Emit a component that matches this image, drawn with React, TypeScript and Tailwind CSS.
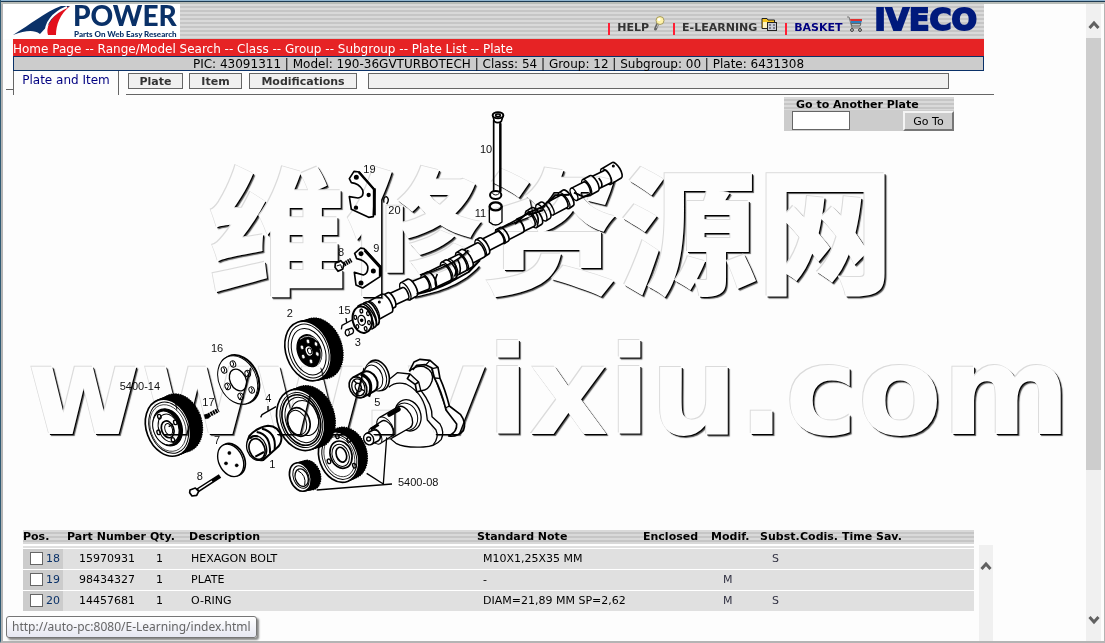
import type { ReactNode } from "react";
import { clsx } from "clsx";

const stripes = "bg-[repeating-linear-gradient(180deg,#d9d9d9_0_2px,#c6c6c6_2px_4px)]";

interface Part {
  pos: number;
  number: string;
  qty: number;
  description: string;
  note: string;
  modif?: boolean;
  subst?: boolean;
}

const parts: Part[] = [
  { pos: 18, number: "15970931", qty: 1, description: "HEXAGON BOLT", note: "M10X1,25X35 MM", subst: true },
  { pos: 19, number: "98434327", qty: 1, description: "PLATE", note: "-", modif: true },
  { pos: 20, number: "14457681", qty: 1, description: "O-RING", note: "DIAM=21,89 MM SP=2,62", modif: true, subst: true },
];

const crumbs = ["Home Page", "Range/Model Search", "Class", "Group", "Subgroup", "Plate List", "Plate"];

function Logo() {
  return (
    <a href="#" aria-label="Power" className="flex h-[35px] w-[177px] shrink-0 items-start bg-white text-[#0a3168]">
      <svg viewBox="0 0 177 35" className="h-[35px] w-[177px] overflow-visible">
        <path d="M10 31 C28 20 42 8 58 2 L67 2 C56 9 46 20 37 30 C30 25 22 27 10 31 Z" fill="#0a3168" />
        <path d="M67 2 C53 8 42 19 45 31 L53 31 C53 21 57 10 67 2 Z" fill="#e3101c" />
        <path d="M64 3 C50 9 41 19 43 31" fill="none" stroke="#fff" strokeWidth="2" />
        <text x="70" y="22" fontFamily="Lato, sans-serif" fontWeight="900" fontSize="28" fill="#0a3168">
          POWER
        </text>
        <text x="71" y="33" fontFamily="Lato, sans-serif" fontWeight="900" fontSize="8" fill="#0a3168">
          Parts On Web Easy Research
        </text>
      </svg>
    </a>
  );
}

function BulbIcon() {
  return (
    <svg viewBox="0 0 12 15" className="h-[15px] w-3">
      <path d="M5 7 L2.500 13" stroke="#666" strokeWidth="3" strokeLinecap="round" />
      <path d="M5.500 7 L3.500 12" stroke="#bbb" />
      <circle cx="7" cy="4.500" r="4" fill="#fff3a8" stroke="#a59a60" />
      <circle cx="6" cy="3.500" r="1.500" fill="#fff" />
    </svg>
  );
}

function FolderIcon() {
  return (
    <svg viewBox="0 0 16 16" className="h-4 w-4">
      <path d="M1 2.500 H6 L7 4 H13.500 V12.500 H1 Z" fill="#f7c520" stroke="#222" />
      <rect x="2" y="6" width="6" height="6" fill="#fff3c0" />
      <rect x="6.500" y="6.500" width="9" height="8" fill="#c9cdd8" stroke="#222" />
      <path d="M8 9 H10 M12 9 H14 M8 12 H10 M12 12 H14" stroke="#334" />
    </svg>
  );
}

function CartIcon() {
  return (
    <svg viewBox="0 0 16 16" className="h-4 w-4">
      <path d="M0 1 H2 L5 12 H14" fill="none" stroke="#777" />
      <path d="M3 3 H15 V5 H3.500 Z" fill="#e03030" />
      <path d="M3.500 5 H15 L14 7 H4 Z" fill="#2f7fc0" />
      <path d="M4 7.500 H14 L13 10 H5 Z" fill="#b9c0c0" stroke="#666" />
      <circle cx="5" cy="14" r="1.400" fill="#ddd" stroke="#333" />
      <circle cx="13" cy="14" r="1.400" fill="#ddd" stroke="#333" />
    </svg>
  );
}

function Chevron({ down }: { down?: boolean }) {
  return (
    <svg viewBox="0 0 12 10" className="h-[10px] w-3">
      <path d={down ? "M1.500 2 L6 7 L10.500 2" : "M1.500 8 L6 3 L10.500 8"} fill="none" stroke="#606060" strokeWidth="3" />
    </svg>
  );
}

function HeaderLink({ label, icon, blue }: { label: string; icon: ReactNode; blue?: boolean }) {
  return (
    <span className="flex items-start">
      <span className="mr-[7px] mt-[7px] h-3 w-[2px] bg-[#ff1f35]" />
      <a href="#" className={clsx("flex items-start gap-1 text-[11px] font-bold", blue ? "text-[#000080]" : "text-[#333]")}>
        <span className="pt-1">{label}</span>
        {icon}
      </a>
    </span>
  );
}

// Cylinder whose near face is at (x1, y1), seen at an angle
function Tube({ d, sw = 5, k = 0.4 }: { d: number[]; sw?: number; k?: number }) {
  const [x1, y1, x2, y2, r] = d;
  const a = Math.atan2(y2 - y1, x2 - x1);
  const nx = -Math.sin(a) * r;
  const ny = Math.cos(a) * r;
  const deg = (a * 180) / Math.PI;
  return (
    <g fill="#fff" stroke="#000" strokeWidth={sw}>
      <path
        d={`M${x1 - nx} ${y1 - ny} L${x2 - nx} ${y2 - ny} A${r * k} ${r} ${deg} 0 1 ${x2 + nx} ${y2 + ny} L${x1 + nx} ${y1 + ny} Z`}
      />
      <ellipse cx={x1} cy={y1} rx={r * k} ry={r} transform={`rotate(${deg} ${x1} ${y1})`} strokeWidth={sw - 1} />
    </g>
  );
}

function Ring({ x, y, rx, ry, fill = "none", sw = 4, rot = -20 }: { x: number; y: number; rx: number; ry: number; fill?: string; sw?: number; rot?: number }) {
  return (
    <ellipse cx={x} cy={y} rx={rx} ry={ry} fill={fill} stroke="#000" strokeWidth={sw} transform={`rotate(${rot} ${x} ${y})`} />
  );
}

// Toothed wheel: stacked black rims behind a white face
function Gear({ x, y, rx, ry, dx, dy, children }: { x: number; y: number; rx: number; ry: number; dx: number; dy: number; children?: ReactNode }) {
  return (
    <g>
      {[1, 0.8, 0.6, 0.4, 0.2].map((t) => (
        <Ring key={t} x={x + dx * t} y={y + dy * t} rx={rx} ry={ry} fill="#000" />
      ))}
      <ellipse
        cx={x + dx}
        cy={y + dy}
        rx={rx + 1}
        ry={ry + 1}
        fill="none"
        stroke="#000"
        strokeWidth="5"
        strokeDasharray="4 3"
        transform={`rotate(-20 ${x + dx} ${y + dy})`}
      />
      <Ring x={x} y={y} rx={rx} ry={ry} fill="#fff" sw={5} />
      <Ring x={x + 2} y={y} rx={rx - 8} ry={ry - 9} sw={3} />
      {children}
    </g>
  );
}

const camshaft = [
  [858, 230, 890, 211, 27],
  [822, 250, 862, 230, 21],
  [800, 262, 822, 250, 26],
  [762, 283, 800, 264, 20],
  [732, 302, 744, 294, 28],
  [690, 326, 732, 304, 21],
  [664, 338, 676, 331, 28],
  [634, 358, 650, 348, 29],
  [600, 376, 634, 360, 21],
  [550, 404, 600, 378, 21],
  [541, 410, 552, 403, 24],
  [490, 438, 541, 412, 20],
  [482, 444, 492, 438, 28],
  [440, 472, 482, 450, 24],
  [426, 484, 440, 475, 31],
  [398, 502, 426, 488, 27],
  [380, 514, 392, 507, 31],
  [334, 540, 380, 518, 26],
  [318, 548, 334, 540, 27],
  [276, 566, 318, 549, 20],
  [256, 574, 276, 563, 29],
  [212, 600, 256, 580, 19],
  [198, 608, 214, 600, 24],
  [160, 632, 200, 610, 31],
  [148, 644, 156, 640, 38],
  [136, 652, 144, 647, 40],
];

const holes16 = [
  [369, 192],
  [342, 210],
  [413, 221],
  [353, 259],
  [425, 270],
  [392, 289],
];

const labels: [string, number, number][] = [
  ["10", 1110, 160],
  ["11", 1094, 352],
  ["19", 760, 220],
  ["20", 835, 341],
  ["8", 684, 468],
  ["9", 790, 457],
  ["15", 685, 641],
  ["3", 734, 737],
  ["2", 530, 651],
  ["16", 303, 757],
  ["5400-14", 29, 869],
  ["17", 277, 917],
  ["4", 466, 907],
  ["5", 793, 917],
  ["7", 312, 1031],
  ["8", 260, 1141],
  ["1", 478, 1103],
  ["5400-08", 864, 1159],
];

function PlateDrawing() {
  return (
    <svg viewBox="0 0 1560 1230" className="ml-[107px] mt-[5px] h-[410px] w-[520px] shrink-0" role="img" aria-label="Plate 6431308">
      {/* valve gear, lock plates and camshaft */}
      <g transform="translate(630 0)" fill="#fff" stroke="#000" strokeWidth="5" strokeLinejoin="round">
        <path d="M521 60 V276 H541 V60 Z" />
        <path d="M541 70 V275" strokeWidth="7" />
        <path d="M519 48 L523 64 Q533 72 544 64 L549 48 Z" />
        <ellipse cx="534" cy="46" rx="16" ry="9" strokeWidth="6" />
        <ellipse cx="534" cy="46" rx="7" ry="4" />
        <ellipse cx="527" cy="285" rx="17" ry="12" strokeWidth="6" />
        <path d="M517 280 Q527 290 538 280" strokeWidth="3" />
        <path d="M508 320 V366 Q527 384 546 366 V320 Z" strokeWidth="4" />
        <ellipse cx="527" cy="319" rx="18" ry="12" strokeWidth="7" />
        <path d="M102 214 L88 236 L94 248 Q116 250 128 270 Q134 292 114 294 L88 290 L94 328 L146 352 L160 350 L164 270 L118 216 Z" />
        <path d="M163 265 V346" strokeWidth="9" />
        <path d="M116 216 L162 268" strokeWidth="7" />
        <circle cx="109" cy="232" r="5" fill="#000" />
        <circle cx="146" cy="285" r="4" fill="#000" />
        <circle cx="108" cy="323" r="4" fill="#000" />
        <path d="M122 444 L104 460 L110 476 Q134 480 143 498 Q146 520 130 525 L103 517 L108 555 L128 564 L180 530 L182 500 L132 446 Z" />
        <path d="M134 450 L181 502 V528" fill="none" strokeWidth="9" />
        <circle cx="123" cy="461" r="5" fill="#000" />
        <circle cx="160" cy="513" r="5" fill="#000" />
        <circle cx="123" cy="549" r="5" fill="#000" />
        <path d="M66 496 L94 480" strokeWidth="14" strokeDasharray="5 2" />
        <path d="M46 490 L62 482 L72 492 L68 508 L54 514 L45 502 Z" />
        <path d="M50 498 L62 494 L66 506" fill="none" strokeWidth="3" />
        <path d="M192 308 Q188 290 200 290 Q210 298 200 312" fill="none" strokeWidth="4" />
        <path d="M64 688 L66 676 L96 660 M80 668 L78 654" fill="none" strokeWidth="4" />
        <path d="M78 690 L96 684 Q104 692 98 700 L82 708 Q72 702 78 690 Z" strokeWidth="4" />
        <path d="M84 688 Q92 694 86 706" fill="none" strokeWidth="3" />
        {camshaft.map((d) => (
          <Tube key={d[0]} d={d} />
        ))}
        <path d="M585 372 L620 340 L675 318 M625 345 L670 330 M690 302 L706 286 L748 284 M762 278 L790 290 L812 286" fill="none" strokeWidth="6" />
        <path d="M290 582 Q340 572 392 546 L446 516 L480 480" fill="none" strokeWidth="6" />
        <path d="M400 484 Q414 504 404 530 M412 478 Q426 498 418 524 M352 522 Q342 542 348 560 M644 334 Q660 352 652 376 M836 234 Q850 250 844 262" fill="none" strokeWidth="5" />
        <circle cx="880" cy="198" r="2" />
        <circle cx="178" cy="606" r="2" />
        <Ring x={127} y={659} rx={29} ry={40} fill="#fff" sw={6} rot={-12} />
        <Ring x={125} y={661} rx={11} ry={15} sw={4} rot={-12} />
        <circle cx="125" cy="661" r="3" fill="#000" />
        {[[124, 633], [144, 641], [147, 668], [137, 686], [112, 680], [106, 652]].map(([x, y]) => (
          <Ring key={x} x={x} y={y} rx={4} ry={6} rot={-12} />
        ))}
      </g>

      {/* gears, washers, bushings and crankshaft */}
      <g transform="translate(0 600)" fill="#fff" stroke="#000" strokeLinejoin="round">
        <Gear x={594} y={153} rx={66} ry={92} dx={34} dy={-8}>
          <Ring x={596} y={155} rx={49} ry={72} sw={3} />
          <Ring x={598} y={152} rx={35} ry={49} fill="#000" />
          <Ring x={596} y={154} rx={28} ry={38} fill="#000" />
          {[[594, 124], [618, 132], [622, 162], [603, 184], [580, 170], [576, 142]].map(([x, y]) => (
            <Ring key={x} x={x} y={y} rx={5} ry={7} fill="#fff" sw={2} />
          ))}
          <Ring x={597} y={153} rx={12} ry={17} fill="#fff" sw={5} />
          <Ring x={599} y={153} rx={6} ry={9} sw={3} />
          <path d="M570 118 Q596 98 622 122 M630 146 Q640 172 622 198" fill="none" stroke="#fff" strokeWidth="2" />
        </Gear>

        <Ring x={388} y={238} rx={56} ry={76} fill="#fff" sw={6} rot={-25} />
        <Ring x={383} y={240} rx={56} ry={76} fill="#fff" sw={3} rot={-25} />
        <Ring x={384} y={240} rx={24} ry={34} sw={4} rot={-25} />
        {holes16.map(([x, y]) => (
          <g key={x}>
            <Ring x={x} y={y} rx={8} ry={10} sw={3} />
            <path d={`M${x - 2} ${y - 8} Q${x + 6} ${y} ${x - 1} ${y + 8}`} fill="none" strokeWidth="3" />
          </g>
        ))}

        <Gear x={174} y={383} rx={65} ry={88} dx={34} dy={-14}>
          <Ring x={174} y={384} rx={52} ry={72} sw={2} />
          <Ring x={173} y={382} rx={42} ry={57} fill="#000" />
          <Ring x={168} y={384} rx={38} ry={52} fill="#fff" sw={3} />
          <Ring x={176} y={384} rx={30} ry={43} sw={3} />
          <Ring x={173} y={388} rx={18} ry={26} sw={5} />
          <Ring x={176} y={388} rx={11} ry={18} sw={3} />
          {[[148, 350], [196, 367], [189, 420], [146, 397]].map(([x, y]) => (
            <Ring key={x} x={x} y={y} rx={5} ry={7} sw={4} />
          ))}
          <path d="M176 380 L190 372 M208 360 Q222 390 204 418" fill="none" strokeWidth="4" />
        </Gear>

        <path d="M288 350 L326 330" strokeWidth="13" strokeDasharray="6 2" />
        <path d="M282 344 L296 342 L298 354 L286 357 Z" fill="#000" />
        <path d="M452 352 L456 344 L498 320 M474 334 V318" fill="none" strokeWidth="4" />

        <Ring x={367} y={479} rx={36} ry={51} fill="#fff" sw={5} rot={-25} />
        <Ring x={362} y={481} rx={36} ry={51} fill="#fff" sw={4} rot={-25} />
        <circle cx="358" cy="459" r="5" fill="#000" />
        <circle cx="348" cy="490" r="5" fill="#000" />
        <circle cx="380" cy="496" r="5" fill="#000" />
        <path d="M262 572 L330 528" strokeWidth="13" />
        <path d="M266 569 L306 543" stroke="#fff" strokeWidth="4" />
        <path d="M240 570 L256 564 L266 574 L260 586 L246 588 L239 578 Z" strokeWidth="5" />

        <Gear x={686} y={471} rx={58} ry={78} dx={24} dy={-12}>
          <Ring x={688} y={470} rx={44} ry={62} sw={2} />
          <Ring x={693} y={464} rx={32} ry={42} sw={5} />
          <Ring x={692} y={466} rx={25} ry={34} sw={3} />
          <Ring x={694} y={464} rx={15} ry={23} sw={5} />
          {[[682, 409], [733, 497], [657, 484], [716, 420]].map(([x, y]) => (
            <Ring key={x} x={x} y={y} rx={5} ry={7} />
          ))}
        </Gear>

        <Gear x={571} y={531} rx={31} ry={44} dx={27} dy={-6}>
          <Ring x={575} y={533} rx={19} ry={27} sw={4} />
          <path d="M564 512 Q590 526 584 556" fill="none" strokeWidth="3" />
        </Gear>

        {/* bushing 1 */}
        <path
          d="M418 408 Q440 382 474 377 Q506 378 514 410 Q516 432 500 444 L460 480 Q440 484 424 466 Q404 438 418 408 Z"
          strokeWidth="6"
        />
        <Ring x={440} y={444} rx={29} ry={38} fill="#fff" sw={4} />
        <Ring x={441} y={447} rx={23} ry={32} sw={5} />
        <path d="M440 396 Q482 402 480 460 M456 386 Q500 396 494 448" fill="none" strokeWidth="6" />
        <path d="M420 416 Q430 404 444 410 M436 470 L462 456" fill="none" strokeWidth="6" />

        <Gear x={572} y={360} rx={69} ry={94} dx={30} dy={-10}>
          <Ring x={574} y={360} rx={55} ry={78} sw={5} />
          <Ring x={576} y={360} rx={48} ry={70} sw={3} />
          <Ring x={584} y={354} rx={40} ry={54} sw={3} />
          <Ring x={566} y={366} rx={33} ry={44} fill="#fff" sw={5} />
          <Ring x={562} y={368} rx={27} ry={38} sw={3} />
        </Gear>

        {/* hub 5 */}
        <Ring x={804} y={226} rx={32} ry={47} fill="#fff" sw={5} />
        <Ring x={797} y={229} rx={31} ry={45} fill="#fff" sw={3} />
        <Ring x={790} y={232} rx={27} ry={38} fill="#fff" sw={3} />
        <Tube d={[744, 262, 776, 245, 33]} sw={6} k={0.75} />
        <path d="M752 222 Q796 240 776 290" fill="none" strokeWidth="9" />
        <Ring x={745} y={262} rx={19} ry={26} sw={4} />
        <Ring x={745} y={262} rx={9} ry={13} sw={4} />
        <path d="M730 240 L742 252 M756 240 L748 254 M762 272 L750 266 M738 284 L742 272" strokeWidth="4" />

        {/* rear web */}
        <path
          d="M898 214 L912 186 L930 178 L960 181 L984 202 L990 235 Q1006 270 1018 318 L1052 344 Q1070 368 1060 392 Q1042 412 1016 408 Q1042 396 1040 372 L1008 330 Q994 270 972 232 L966 204 L946 194 L920 196 L908 210"
          fill="none"
          strokeWidth="5"
        />
        <path d="M960 181 L948 194 M984 202 L966 206 M990 235 L972 234 M1018 318 L1006 324" strokeWidth="4" />
        <path d="M898 214 Q916 196 942 200 Q974 214 966 244 Q956 272 934 272" fill="none" strokeWidth="4" />
        {/* front web */}
        <path
          d="M840 236 L862 218 L900 222 L926 246 L932 270 Q968 316 966 350 L990 372 Q1004 396 994 418 Q976 440 940 441 Q884 444 858 430 Q822 404 824 378"
          fill="none"
          strokeWidth="4"
        />
        <path d="M836 262 Q856 244 888 252 Q936 276 948 330 L952 360 L978 390 Q988 412 970 434" fill="none" strokeWidth="4" />
        <path d="M900 222 L892 236 L916 254 L920 276 L934 272 M926 246 L914 254" fill="none" strokeWidth="5" />
        <Ring x={894} y={346} rx={38} ry={48} fill="#fff" sw={4} />
        <Ring x={888} y={350} rx={34} ry={42} fill="#fff" sw={3} />
        <Tube d={[826, 384, 882, 352, 36]} sw={4} k={0.6} />
        <Tube d={[796, 408, 830, 386, 27]} sw={4} k={0.6} />
        <Tube d={[776, 417, 796, 407, 18]} sw={5} k={0.8} />
        <circle cx="776" cy="417" r="6" strokeWidth="4" />
        <path d="M838 344 L866 328" strokeWidth="13" strokeLinecap="round" />
        <path d="M782 388 L806 374" strokeWidth="8" />

        <path d="M620 570 L846 552 M830 412 L820 552 L770 520" fill="none" strokeWidth="4" />
      </g>

      <g fontFamily="Liberation Sans, sans-serif" fontSize="33" fill="#111">
        {labels.map(([text, x, y]) => (
          <text key={`${text}-${x}`} x={x} y={y}>
            {text}
          </text>
        ))}
      </g>
    </svg>
  );
}

function Watermark() {
  return (
    <div
      aria-hidden="true"
      className="pointer-events-none absolute inset-0 whitespace-nowrap leading-none text-white mix-blend-multiply [text-shadow:-1px_-1px_0_#ddd,1px_1px_0_#000,2px_2px_1px_#555]"
    >
      <p className="absolute left-[206px] top-[61px] font-['Noto_Sans_CJK_SC',sans-serif] text-[137px] font-black">维修资源网</p>
      <p className="absolute left-[24px] top-[235px] text-[123px] font-bold">www.vixiu.com</p>
    </div>
  );
}

function GoToPlate() {
  return (
    <form className="ml-[154px] mt-[2px] w-[170px] self-start bg-[#ccc]" onSubmit={(e) => e.preventDefault()}>
      <label htmlFor="plate" className={clsx("block h-[13px] pl-3 text-[11px] font-bold leading-[15px]", stripes)}>
        Go to Another Plate
      </label>
      <div className="flex justify-between pl-2 pt-px">
        <input id="plate" className="h-[19px] w-[58px] border border-[#666] bg-white px-1 text-[11px]" />
        <button className="h-5 w-[51px] border-2 border-t-[#f4f4f4] border-l-[#f4f4f4] border-b-[#777] border-r-[#777] bg-[#ccc] text-[11px] leading-none">
          Go To
        </button>
      </div>
    </form>
  );
}

function Tabs() {
  const tab = "h-4 border border-[#666] bg-[#f0f0f0] text-[11px] font-bold leading-[15px] text-[#333]";
  return (
    <nav className="flex h-6 items-start">
      <span className="ml-[3px] mt-[18px] w-[7px] border-t border-[#666]" />
      <a href="#" className="h-6 w-[106px] border-x border-[#666] text-center text-xs leading-[19px] text-[#000080]">
        Plate and Item
      </a>
      <div className="ml-[7px] flex h-6 w-[868px] items-start border-b border-[#666] pl-[2px] pt-[2px]">
        <button className={clsx(tab, "w-[55px]")}>Plate</button>
        <button className={clsx(tab, "ml-[6px] w-[53px]")}>Item</button>
        <button className={clsx(tab, "ml-[7px] w-[108px]")}>Modifications</button>
        <div className={clsx(tab, "ml-[11px] mr-[45px] flex-1")} />
      </div>
    </nav>
  );
}

function PartsTable() {
  return (
    <section className="relative flex flex-1">
      <table className="ml-5 w-[951px] table-fixed self-start border-collapse text-left text-[11px] text-black">
        <colgroup>
          <col className="w-[40px]" />
          <col className="w-[87px]" />
          <col className="w-[39px]" />
          <col className="w-[288px]" />
          <col className="w-[166px]" />
          <col className="w-[68px]" />
          <col className="w-[49px]" />
          <col className="w-[40px]" />
          <col className="w-[42px]" />
          <col />
        </colgroup>
        <thead>
          <tr className={clsx("h-[13px] whitespace-nowrap leading-[14px]", stripes)}>
            <th className="p-0">Pos.</th>
            <th className="p-0 pl-1">Part Number</th>
            <th className="p-0">Qty.</th>
            <th className="p-0">Description</th>
            <th className="p-0">Standard Note</th>
            <th className="p-0">Enclosed</th>
            <th className="p-0">Modif.</th>
            <th className="p-0">Subst.</th>
            <th className="p-0">Codis.</th>
            <th className="p-0">Time Sav.</th>
          </tr>
        </thead>
        <tbody>
          <tr className="h-[3px] border-t-2 border-white bg-[#e0e0e0]">
            <td colSpan={10} className="p-0" />
          </tr>
          {parts.map((p) => (
            <tr key={p.pos} className="h-[21px] border-t border-white bg-[#e0e0e0] leading-[20px]">
              <td className="bg-[#ccc] p-0">
                <label className="ml-[7px] flex items-center gap-[3px] text-[#0a3168]">
                  <input type="checkbox" className="size-[13px] appearance-none border border-[#666] bg-white" />
                  {p.pos}
                </label>
              </td>
              <td className="p-0 pl-4">{p.number}</td>
              <td className="p-0 pl-[6px]">{p.qty}</td>
              <td className="p-0 pl-[2px]">{p.description}</td>
              <td className="p-0 pl-[6px]">{p.note}</td>
              <td className="p-0" />
              <td className="p-0 pl-3 text-[#334]">{p.modif && "M"}</td>
              <td className="p-0 pl-3 text-[#334]">{p.subst && "S"}</td>
              <td className="p-0" />
              <td className="p-0" />
            </tr>
          ))}
        </tbody>
      </table>
      <div className="ml-[5px] mt-[15px] flex w-[14px] justify-center bg-[#f0f0f0] pt-4">
        <Chevron />
      </div>
    </section>
  );
}

export default function App() {
  return (
    <div className="relative flex min-h-screen flex-col border-b-2 border-l border-b-[#b4b4b4] border-l-[#2f5a73] bg-[#fdfdfd] font-['DejaVu_Sans',sans-serif]">
      <div className="h-1 border-b-2 border-t border-b-[#b9bdb8] border-t-[#8fb4cf] bg-[#1d3a52]" />
      <div className="flex flex-1 border-l-2 border-r border-l-[#b4b4b4] border-r-[#b4b4b4]">
        <div className="flex flex-1 flex-col">
          <header className="w-[981px]">
            <div className={clsx("ml-[10px] h-[35px]", stripes)}>
              <div className="-ml-[10px] flex h-[35px] items-start">
                <Logo />
                <div className="ml-auto mt-3 flex items-start gap-2">
                  <HeaderLink label="HELP" icon={<BulbIcon />} />
                  <HeaderLink label="E-LEARNING" icon={<FolderIcon />} />
                  <HeaderLink label="BASKET" icon={<CartIcon />} blue />
                </div>
                <span className="ml-3 mr-[7px] mt-px text-[30px] font-bold leading-[30px] text-[#001a7c] [-webkit-text-stroke:2px_#001a7c]">
                  IVECO
                </span>
              </div>
            </div>
            <p className="ml-[10px] h-[17px] bg-[#e62325] text-xs leading-[20px] text-white">
              {crumbs.map((c, i) => (
                <span key={c}>
                  {i > 0 && " -- "}
                  <a href="#">{c}</a>
                </span>
              ))}
            </p>
            <p className="ml-[10px] h-[15px] border border-[#0a3168] bg-[#ccc] text-center text-xs leading-[14px] text-black">
              PIC: 43091311 | Model: 190-36GVTURBOTECH | Class: 54 | Group: 12 | Subgroup: 00 | Plate: 6431308
            </p>
          </header>
          <Tabs />
          <main className="relative flex h-[435px]">
            <PlateDrawing />
            <GoToPlate />
            <Watermark />
          </main>
          <PartsTable />
        </div>

        <div className="mr-[3px] flex w-[15px] flex-col items-center bg-[#f0f0f0]">
          <div className="flex h-[34px] items-center pt-2">
            <Chevron />
          </div>
          <div className="h-[432px] w-full bg-[#cdcdcd]" />
          <div className="mb-4 mt-auto">
            <Chevron down />
          </div>
        </div>
      </div>

      <div className="absolute bottom-[3px] left-[5px] flex h-[22px] items-center rounded-[3px] border border-[#767676] bg-linear-to-b from-white to-[#e6e7f2] px-[5px] font-['Noto_Sans',sans-serif] text-xs text-[#666] shadow-[2px_2px_2px_#888]">
        http://auto-pc:8080/E-Learning/index.html
      </div>
    </div>
  );
}
